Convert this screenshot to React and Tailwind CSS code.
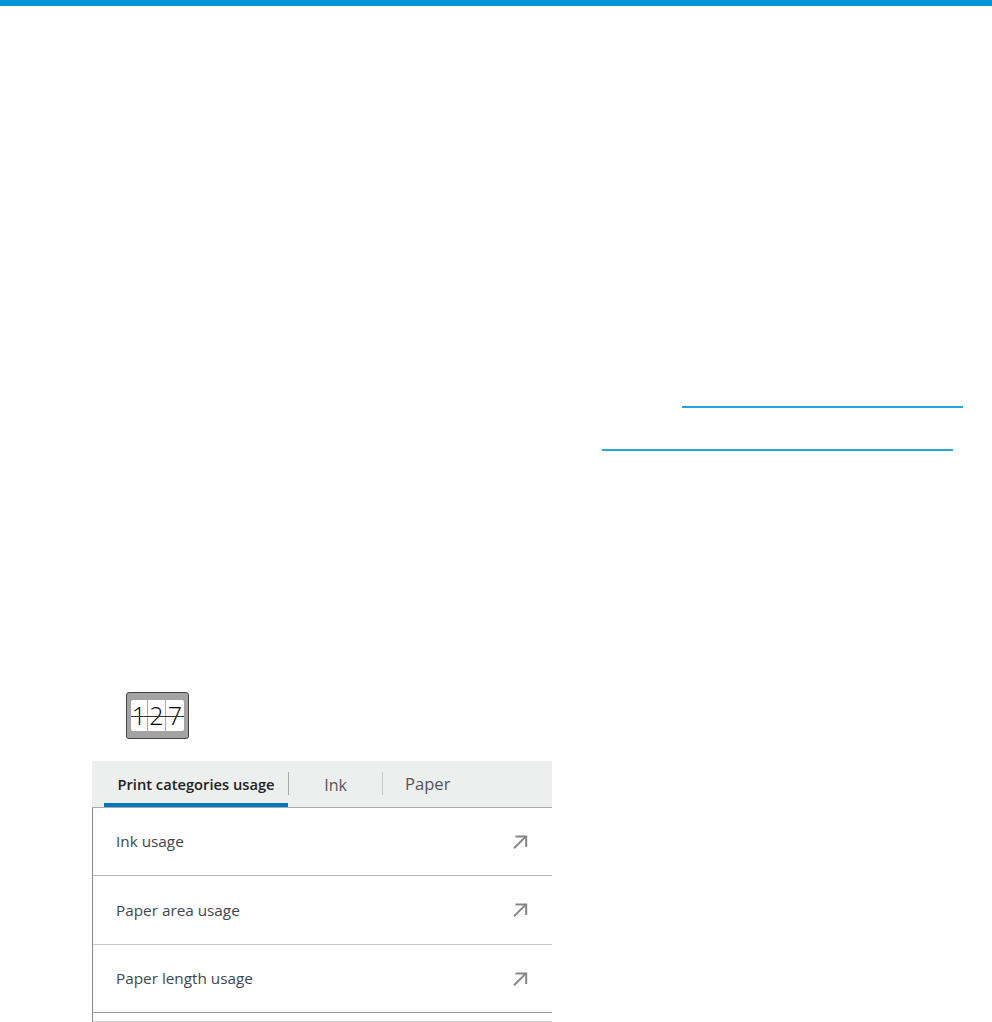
import React from "react";

function ArrowIcon() {
  return (
    <svg width="15" height="14" viewBox="0 0 15 14" fill="none" stroke="#858585" strokeWidth="2">
      <path d="M1 13.3 L13 1.4" />
      <path d="M2.5 1.4 H13.2 V12" />
    </svg>
  );
}

function Counter() {
  return (
    <div className="w-[63px] h-[47px] ml-[126px] rounded-[3px] border border-[#444] bg-[#a3a3a3] pt-[7px] px-[4px]">
      <div className="relative flex h-[31px] w-[53px] rounded-[2px] bg-white font-['Open_Sans',sans-serif] font-light text-[25px] leading-[31px] text-black">
        <div className="w-[17px] text-center border-r border-[#aaa]">1</div>
        <div className="w-[18px] text-center border-r border-[#aaa]">2</div>
        <div className="w-[18px] text-center">7</div>
        {/* line through the digits */}
        <div className="absolute left-0 right-0 top-[16px] h-px bg-[#333]"></div>
      </div>
    </div>
  );
}

function UsageRow({ label, className }) {
  return (
    <div className={"flex items-center justify-between pl-[23px] pr-[24px] border-b " + className}>
      <span className="text-[15.3px] font-medium text-[#3c4650]">{label}</span>
      <ArrowIcon />
    </div>
  );
}

export default function App() {
  return (
    <div className="w-[992px] h-[1022px] overflow-hidden bg-white font-['Open_Sans',sans-serif]">
      {/* top bar */}
      <div className="h-[6px] bg-[#0096d6]"></div>

      {/* link underlines */}
      <div className="h-[400px] pt-[400px]">
        <div className="ml-[682px] w-[281px] h-[2px] bg-[#2aa5dc]"></div>
        <div className="ml-[602px] w-[351px] h-[2px] mt-[41px] bg-[#2aa5dc]"></div>
      </div>

      <div className="pt-[286px]">
        <Counter />
      </div>

      {/* tabs panel */}
      <div className="ml-[92px] mt-[22px] w-[460px]">
        <div className="h-[47px] flex items-start pl-[12px] bg-[#edefef] border-b border-[#aaa]">
          <div className="w-[184px] h-[46px] pt-[5px] flex items-center justify-center border-b-4 border-[#0076bd] text-[14.7px] font-semibold text-[#222]">
            Print categories usage
          </div>
          <div className="w-px h-[23px] mt-[11px] bg-[#a8a8a8]"></div>
          <div className="w-[93px] h-[46px] pt-[1px] flex items-center justify-center text-[16px] text-[#555]">
            Ink
          </div>
          <div className="w-px h-[23px] mt-[11px] bg-[#c8c8c8]"></div>
          <div className="pl-[22px] h-[46px] pt-[1px] flex items-center text-[16.6px] text-[#555]">
            Paper
          </div>
        </div>
        <div className="border-l border-[#8a8a8a]">
          <UsageRow label="Ink usage" className="h-[68px] border-[#b8b8b8]" />
          <UsageRow label="Paper area usage" className="h-[69px] border-[#c8c8c8]" />
          <UsageRow label="Paper length usage" className="h-[68px] border-[#999]" />
          <div className="h-[9px] border-b border-[#cfcfcf]"></div>
        </div>
      </div>
    </div>
  );
}
